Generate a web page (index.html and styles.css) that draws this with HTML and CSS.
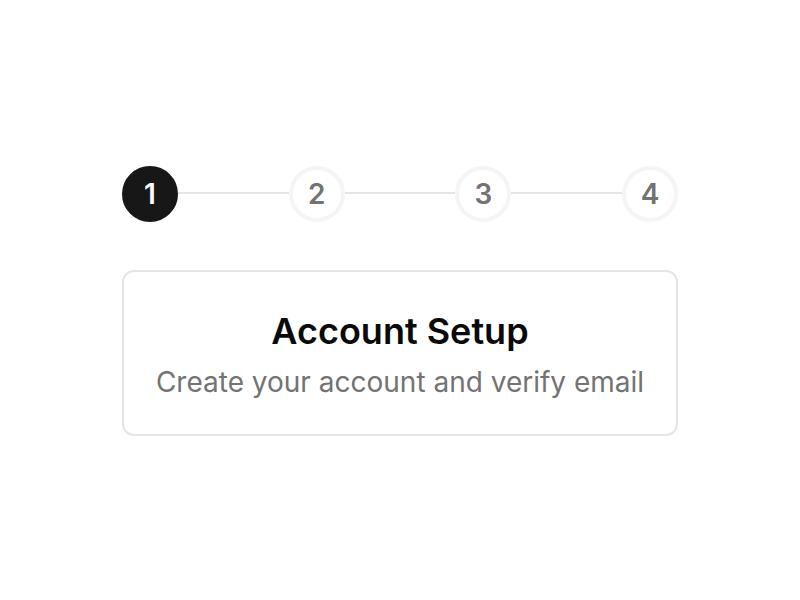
FILE: index.html
```html
<!DOCTYPE html>
<html lang="en">
<head>
  <meta charset="UTF-8" />
  <meta name="viewport" content="width=device-width, initial-scale=1.0"/>
  <title>Account Setup</title>
  <link rel="stylesheet" href="styles.css">
</head>
<body>
  <main class="stepper">
    <nav class="steps">
      <button type="button" class="step active" aria-current="step">1</button>
      <span class="line"></span>
      <button type="button" class="step">2</button>
      <span class="line"></span>
      <button type="button" class="step">3</button>
      <span class="line"></span>
      <button type="button" class="step">4</button>
    </nav>

    <section class="panel">
      <h1 class="panel-title">Account Setup</h1>
      <p class="panel-text">Create your account and verify email</p>
    </section>
  </main>
</body>
</html>
```
FILE: styles.css
```css
* {
  box-sizing: border-box;
}

body {
  margin: 0;
  padding-top: 2px;
  min-height: 100vh;
  display: flex;
  align-items: center;
  justify-content: center;
  background-color: #fff;
  color: #0a0a0a;
  font-family: Inter, sans-serif;
}

.stepper {
  display: flex;
  flex-direction: column;
  gap: 48px;
}

.steps {
  display: flex;
  align-items: center;
}

.step {
  width: 56px;
  height: 56px;
  padding: 0;
  border: 4px solid #f5f5f5;
  border-radius: 50%;
  background-color: #fff;
  color: #737373;
  font-family: inherit;
  font-size: 28px;
  font-weight: 600;
  line-height: 40px;
  cursor: pointer;
}

.step.active {
  border-color: #171717;
  background-color: #171717;
  color: #fafafa;
}

.line {
  flex: 1;
  height: 2px;
  margin-bottom: 2px;
  background-color: #e5e5e5;
}

.panel {
  display: flex;
  flex-direction: column;
  gap: 4px;
  padding: 32px;
  border: 2px solid #e5e5e5;
  border-radius: 12px;
  text-align: center;
}

.panel-title {
  margin: 0;
  font-size: 36px;
  font-weight: 600;
  line-height: 54px;
}

.panel-text {
  margin: 0;
  color: #737373;
  font-size: 28px;
  line-height: 40px;
}
```
